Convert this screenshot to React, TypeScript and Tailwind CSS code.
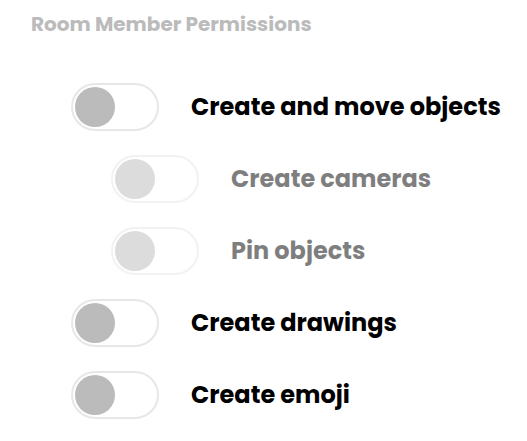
type Permission = {
  id: string;
  label: string;
  nested?: boolean;
};

const permissions: Permission[] = [
  { id: "objects", label: "Create and move objects" },
  { id: "cameras", label: "Create cameras", nested: true },
  { id: "pins", label: "Pin objects", nested: true },
  { id: "drawings", label: "Create drawings" },
  { id: "emoji", label: "Create emoji" },
];

function PermissionSwitch({ id, label, nested }: Permission) {
  return (
    <div className={nested ? "flex items-center gap-8 pl-10 opacity-50" : "flex items-center gap-8"}>
      <input
        id={id}
        type="checkbox"
        role="switch"
        disabled={nested}
        className="h-12 w-22 shrink-0 appearance-none rounded-full border-2 border-[#e7e7e7] bg-white p-0.5 before:block before:size-10 before:rounded-full before:bg-[#bbbbbb] checked:before:ml-10"
      />
      <label htmlFor={id} className="text-2xl font-bold whitespace-nowrap text-black">
        {label}
      </label>
    </div>
  );
}

export default function App() {
  return (
    <main className="bg-white px-[31px] pt-2 font-[Poppins,Inter,sans-serif]">
      <fieldset>
        <legend className="text-xl leading-8 font-bold text-[#bbbbbb]">Room Member Permissions</legend>
        <div className="flex flex-col gap-6 pt-[43px] pl-10">
          {permissions.map((permission) => (
            <PermissionSwitch key={permission.id} {...permission} />
          ))}
        </div>
      </fieldset>
    </main>
  );
}
